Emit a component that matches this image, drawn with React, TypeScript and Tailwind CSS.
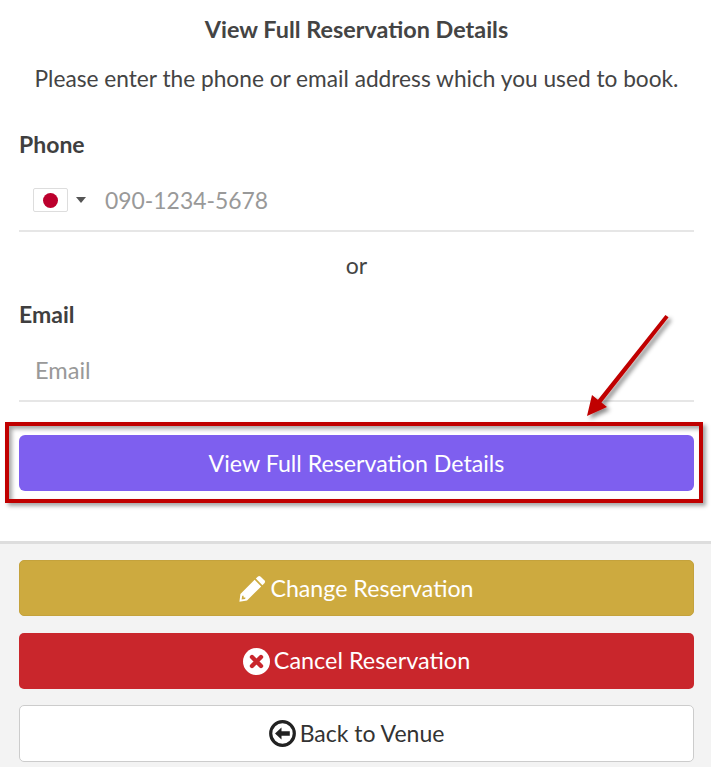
import React from "react";

function PencilIcon() {
  return (
    <svg width="27" height="27" viewBox="0 0 27 27" fill="#ffffff" fillRule="evenodd" aria-hidden="true" className="shrink-0">
      <path d="M19 1.4 Q20.2 0.4 21.4 1.4 L25.6 5.6 Q26.6 6.8 25.6 8 L23.4 10.2 L16.8 3.6 Z" />
      <path d="M15.6 4.8 L22.2 11.4 L8 25.6 L0.4 26.8 L1.4 19 Z M3.2 20.8 L2.6 24.6 L6.2 24 L6.4 22.6 L4.6 22.6 L4.6 20.8 Z" />
    </svg>
  );
}

function CancelIcon() {
  return (
    <svg width="27" height="27" viewBox="0 0 27 27" aria-hidden="true" className="shrink-0">
      <circle cx="13.5" cy="13.5" r="13.5" fill="#ffffff" />
      <path d="M9 9 L18 18 M18 9 L9 18" stroke="#c9262c" strokeWidth="4.4" strokeLinecap="round" />
    </svg>
  );
}

function BackIcon() {
  return (
    <svg width="27" height="27" viewBox="0 0 27 27" aria-hidden="true" className="shrink-0">
      <circle cx="13.5" cy="13.5" r="11.8" fill="none" stroke="#222222" strokeWidth="3.2" />
      <path d="M6 13.5 L12.5 7.5 L12.5 11.3 L20.8 11.3 L20.8 15.7 L12.5 15.7 L12.5 19.5 Z" fill="#222222" />
    </svg>
  );
}

export default function App() {
  return (
    <div className="relative h-[767px] w-[711px] overflow-hidden bg-[#f3f3f3] font-['Lato',sans-serif] text-[#3c3c3c]">
      <section className="h-[544px] border-b-[3px] border-[#dddddd] bg-white pl-[19px] pr-[17px]">
        <h2 className="pt-[14px] text-center text-[23.4px] font-bold leading-[30px] text-[#444444]">View Full Reservation Details</h2>
        <p className="mt-[20px] text-center text-[22.7px] leading-[30px] text-[#444444]">Please enter the phone or email address which you used to book.</p>
        <label className="mt-[35px] block text-[23px] font-bold leading-[30px] text-[#3f3f3f]">Phone</label>
        <div className="mt-[13px] flex h-[60px] items-center border-b-2 border-[#e6e6e6] pb-[2px] pl-[14px]">
          <span className="flex h-[24px] w-[35px] items-center justify-center rounded-[2px] border border-[#dddddd] bg-white">
            <span className="h-[15px] w-[15px] rounded-full bg-[#bc002d] blur-[0.5px]" />
          </span>
          <span className="ml-[8px] h-0 w-0 border-x-[5px] border-t-[6px] border-x-transparent border-t-[#555555]" />
          <span className="ml-[19px] text-[22.9px] text-[#999999]">090-1234-5678</span>
        </div>
        <p className="mt-[18px] text-center text-[23px] leading-[30px] text-[#444444]">or</p>
        <label className="mt-[19px] block text-[23px] font-bold leading-[30px] text-[#3f3f3f]">Email</label>
        <div className="mt-[13px] flex h-[60px] items-center border-b-2 border-[#e6e6e6] pl-[16px] text-[23.6px] text-[#999999]">Email</div>
        <button className="mt-[33px] block h-[56px] w-full rounded-[6px] bg-[#7e5fef] text-center text-[23.2px] text-white">View Full Reservation Details</button>
      </section>

      <div className="flex flex-col pl-[19px] pr-[17px] pt-[16px]">
        <button className="flex h-[56px] items-center justify-center gap-[4px] rounded-[5px] border border-[#c4a23c] bg-[#cdaa3f] text-[23.2px] text-white">
          <PencilIcon />
          <span>Change Reservation</span>
        </button>
        <button className="mt-[17px] flex h-[56px] items-center justify-center gap-[4px] rounded-[5px] bg-[#c9262c] text-[23.4px] text-white">
          <CancelIcon />
          <span className="pb-[1px]">Cancel Reservation</span>
        </button>
        <button className="mt-[16px] flex h-[57px] items-center justify-center gap-[4px] rounded-[5px] border border-[#cccccc] bg-white text-[23px] text-[#333333]">
          <BackIcon />
          <span>Back to Venue</span>
        </button>
      </div>

      <div className="absolute left-[5px] top-[422px] h-[81px] w-[698px] border-[4px] border-[#c00000] shadow-[3px_3px_4px_rgba(0,0,0,0.35),inset_3px_3px_4px_rgba(0,0,0,0.35)]" />
      <svg className="absolute left-[575px] top-[305px]" width="110" height="125" viewBox="575 305 110 125">
        <defs>
          <filter id="s" x="-30%" y="-30%" width="170%" height="170%">
            <feDropShadow dx="3" dy="3" stdDeviation="2" floodColor="#000" floodOpacity="0.45" />
          </filter>
        </defs>
        <g filter="url(#s)" fill="#c00000">
          <path d="M665.4 315 L668.6 317.3 L601.5 402.5 L607 407 L587 416 L592 395 L597.9 399.8 Z" />
        </g>
      </svg>
    </div>
  );
}
